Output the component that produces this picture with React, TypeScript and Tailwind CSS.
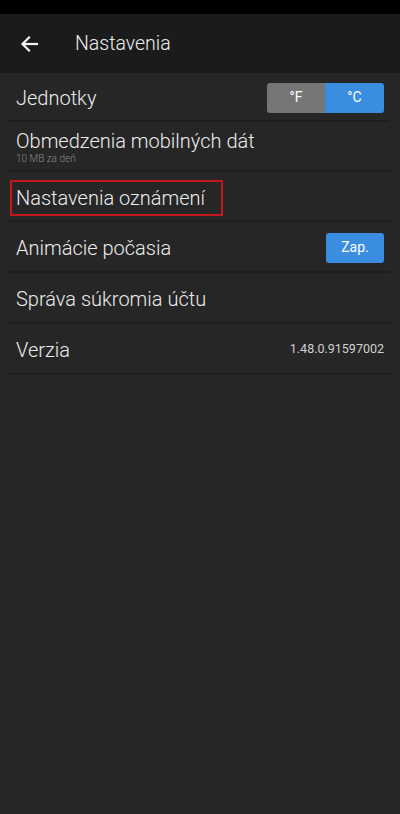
import React from 'react';

const Row: React.FC<{ children: React.ReactNode; className?: string }> = ({ children, className = '' }) => (
  <div className={`flex items-center justify-between border-b-2 border-[#1e1e1e] pl-[8px] pr-[6px] pt-[2px] ${className}`}>
    {children}
  </div>
);

export default function App() {
  return (
    <div className="w-[400px] h-[814px] bg-[#262626] text-[#ececec] flex flex-col font-['Roboto'] font-light">
      <div className="h-[14px] bg-black" />
      <div className="h-[59px] bg-[#1b1b1b] flex items-center pt-[1px]">
        <div className="w-[75px] pl-[20px] flex items-center">
          <svg width="19" height="18" viewBox="0 0 19 18" fill="none" stroke="#f2f2f2" strokeWidth="2.2" strokeLinecap="square">
            <path d="M17 9H3" />
            <path d="M9 2.5L2.5 9L9 15.5" />
          </svg>
        </div>
        <span className="text-[19.5px] text-[#ededed]">Nastavenia</span>
      </div>

      <div className="ml-[8px] mr-[10px] flex flex-col">
        <Row className="h-[49px]">
          <span className="text-[20px]">Jednotky</span>
          <div className="flex h-[30px] rounded-[3px] overflow-hidden text-[14px] font-normal text-white">
            <div className="w-[58px] bg-[#767676] flex items-center justify-center">°F</div>
            <div className="w-[59px] bg-[#3a8de0] flex items-center justify-center">°C</div>
          </div>
        </Row>
        <Row className="h-[50px]">
          <div className="flex flex-col leading-none">
            <span className="text-[20px] leading-[23px]">Obmedzenia mobilných dát</span>
            <span className="text-[10px] text-[#8a8a8a] leading-[12px]">10 MB za deň</span>
          </div>
        </Row>
        <Row className="h-[50px]">
          <div className="ml-[-6px] mt-[2px] border-2 border-[#c4161c] h-[36px] w-[213px] flex items-center pl-[4px]">
            <span className="text-[20px]">Nastavenia oznámení</span>
          </div>
        </Row>
        <Row className="h-[51px]">
          <span className="text-[20px]">Animácie počasia</span>
          <div className="w-[58px] h-[30px] rounded-[3px] bg-[#3a8de0] flex items-center justify-center text-[14px] font-normal text-white">Zap.</div>
        </Row>
        <Row className="h-[51px]">
          <span className="text-[20px]">Správa súkromia účtu</span>
        </Row>
        <Row className="h-[51px]">
          <span className="text-[20px]">Verzia</span>
          <span className="text-[12.5px] font-normal text-[#d0d0d0]">1.48.0.91597002</span>
        </Row>
      </div>
    </div>
  );
}
